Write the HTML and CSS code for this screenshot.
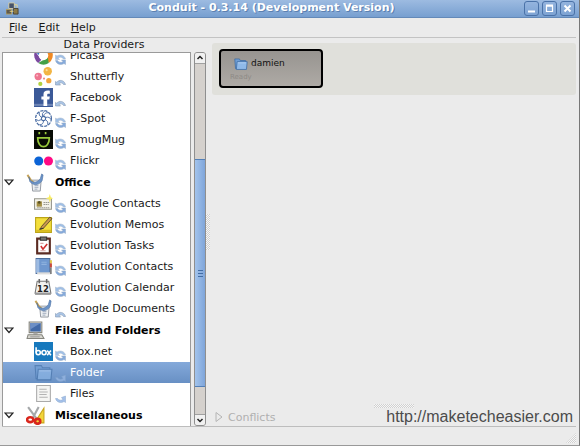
FILE: index.html
```
<!DOCTYPE html>
<html lang="en">

<head>
    <meta charset="UTF-8">
    <meta name="viewport" content="width=device-width, initial-scale=1.0">
    <title>Conduit - 0.3.14 (Development Version)</title>
    <link rel="stylesheet" href="styles.css">
</head>

<body>
    <!-- shared icons -->
    <svg class="sprites" width="0" height="0" aria-hidden="true">
        <symbol id="sync" viewBox="0 0 11 11">
            <path d="M.5 1v4.500h4L3 4c2-1.500 4-1 5.500 1h2C9.500 1 5 0 2 2z" fill="#9fbfe6" stroke="#a9b9cc" stroke-width=".5" />
            <path d="M10.500 10.500V6h-4L8 7.500C6 9 4 8.500 2.500 6.500h-2C1.500 10.500 6 11.500 9 9.500z" fill="#86abdc" stroke="#93a9c6" stroke-width=".5" />
        </symbol>
        <symbol id="sync-up" viewBox="0 0 11 11">
            <path d="M.5 10V6.500l1.200.7C4 4.500 9 4.500 10.500 9.500H8.500C7.500 7.500 5.500 7.500 4 8.500L5.500 10z" fill="#a9c4e6" stroke="#8398b4" stroke-width=".6" />
        </symbol>
        <symbol id="sync-down" viewBox="0 0 11 11">
            <path d="M10.500 4v6.500L9 9.500C6 11.500 1.500 10.500.5 6.500h2C4 8.500 6 8.500 8 7.500L6.500 5.500z" fill="#a3c0ea" stroke="#8ba6ca" stroke-width=".5" />
        </symbol>
        <symbol id="folder" viewBox="0 0 18 18">
            <path d="M1 2.500h6l1 2h7V15H2z" fill="#6f9ed4" stroke="#3e6ca3" />
            <path d="M4 6h13l-1 10H3z" fill="#8fb9e8" stroke="#3e6ca3" />
            <path d="M5 7.500h10.500" stroke="#b9d5f5" />
        </symbol>
        <symbol id="office" viewBox="0 0 20 20">
            <path d="M6 7.500l10 0-1 11.500H7z" fill="#eef0f2" stroke="#9298a0" />
            <path d="M1.500 2l4 6 3 2.500" fill="none" stroke="#c9a456" stroke-width="2" />
            <path d="M3 4c1 6 8 8 12 2l1.500-5 1.500 1-1 6c-4 6-10 5-13 1z" fill="#6b93c8" stroke="#456c9f" stroke-width=".6" />
            <path d="M9 13h4M9 15h4M9 17h3" stroke="#9aa8ba" />
        </symbol>
        <symbol id="expander" viewBox="0 0 10 7">
            <path d="M1 1h8L5 5.500z" fill="#fff" stroke="#222" stroke-width="1.200" />
        </symbol>
    </svg>

    <header class="titlebar">
        <svg class="app-icon" viewBox="0 0 14 14">
            <path d="M3 1h6v6H3z" fill="#46536a" stroke="#d5cfae" />
            <path d="M0 8h6v5H0z" fill="#5e5a4e" stroke="#b7a368" />
            <path d="M8 7h5v6H8z" fill="#8c7a47" stroke="#4a4437" />
            <path d="M9 3h3v3M4 10h4" stroke="#e8d88a" fill="none" />
        </svg>
        <h1>Conduit - 0.3.14 (Development Version)</h1>
        <div class="window-buttons">
            <button aria-label="Minimize"><svg viewBox="0 0 13 13"><path d="M3 9.500h7" stroke="#fff" stroke-width="2" /></svg></button>
            <button aria-label="Maximize"><svg viewBox="0 0 13 13"><path d="M3.500 4h6v5.500h-6z" fill="none" stroke="#fff" stroke-width="1.200" /><path d="M3 3.500h7" stroke="#fff" stroke-width="2" /></svg></button>
            <button aria-label="Close"><svg viewBox="0 0 13 13"><path d="M3.500 3.500l6 6M9.500 3.500l-6 6" stroke="#fff" stroke-width="2" /></svg></button>
        </div>
    </header>

    <nav class="menubar">
        <button><u>F</u>ile</button>
        <button><u>E</u>dit</button>
        <button><u>H</u>elp</button>
    </nav>

    <main class="panes">
        <section class="providers">
            <h2>Data Providers</h2>
            <div class="tree-box">
                <ul class="tree">
                    <li><button class="row">
                        <svg class="icon" viewBox="0 0 18 18"><path d="M9 0a9 9 0 0 1 8 5H8z" fill="#e8453c" /><path d="M17 5a9 9 0 0 1-3 11L10 7z" fill="#f08a24" /><path d="M14 16a9 9 0 0 1-10 0l9-5z" fill="#43a047" /><path d="M4 16A9 9 0 0 1 1 5l6 8z" fill="#7b4aa0" /><path d="M1 5a9 9 0 0 1 8-5L5 9z" fill="#3d7cc9" /><circle cx="9" cy="9" r="4.500" fill="#fff" /></svg>
                        <svg class="sync"><use href="#sync" /></svg>Picasa</button></li>
                    <li><button class="row">
                        <svg class="icon" viewBox="0 0 18 18"><circle cx="13" cy="4" r="4" fill="#f2b544" /><circle cx="4" cy="9" r="3.500" fill="#ee7590" /><circle cx="14" cy="13" r="2.500" fill="#f3a53b" /><circle cx="6" cy="16" r="2" fill="#b3d240" /><circle cx="9.500" cy="11" r="1" fill="#e88" /><circle cx="3" cy="8" r="1" fill="#f8bcc8" /><circle cx="12" cy="3" r="1" fill="#fade9b" /></svg>
                        <svg class="sync"><use href="#sync-up" /></svg>Shutterfly</button></li>
                    <li><button class="row">
                        <svg class="icon" viewBox="0 0 18 18"><path d="M0 0h18v18H0z" fill="#3b5998" /><path d="M0 15h18v2H0z" fill="#6d84b4" /><path d="M9 17v-6H7V8h2V6c0-3 2-4 6-3.500v3c-2-.3-2.500 0-2.500 1V8H15l-.5 3h-2v6z" fill="#fff" /></svg>
                        <svg class="sync"><use href="#sync-up" /></svg>Facebook</button></li>
                    <li><button class="row">
                        <svg class="icon" viewBox="0 0 18 18"><g fill="none" stroke="#4d6fa5"><circle cx="9" cy="9" r="7.500" stroke-dasharray="3 1" stroke-width="1.200" /><circle cx="9" cy="9" r="2" /><path d="M9 7q1-4 5-3.500M11 8q4-1 5 2M11 10q3 2 2 5M9 11q0 4-4 4M7 10q-3 2-5 0M7 8q-3-2-2-5M8 7q-1-3 2-5" stroke-width=".9" /></g></svg>
                        <svg class="sync"><use href="#sync" /></svg>F-Spot</button></li>
                    <li><button class="row">
                        <svg class="icon" viewBox="0 0 18 18"><path d="M0 0h18v18H0z" fill="#080b05" /><path d="M3.500 7.500h11c0 11-11 11-11 0z" fill="none" stroke="#9acb3c" stroke-width="1.600" /><path d="M5 2v2M11 2v2" stroke="#9acb3c" stroke-width="1.600" /></svg>
                        <svg class="sync"><use href="#sync" /></svg>SmugMug</button></li>
                    <li><button class="row">
                        <svg class="icon" viewBox="0 0 18 18"><circle cx="4.500" cy="9.500" r="4.300" fill="#0b63d6" /><circle cx="13.700" cy="9.500" r="4.300" fill="#ff0a84" /></svg>
                        <svg class="sync"><use href="#sync" /></svg>Flickr</button></li>

                    <li><button class="row group" aria-expanded="true">
                        <svg class="arrow"><use href="#expander" /></svg>
                        <svg class="icon"><use href="#office" /></svg>Office</button></li>
                    <li><button class="row">
                        <svg class="icon" viewBox="0 0 18 18"><path d="M.5 4.500h16v10H.5z" fill="#f4f3ea" stroke="#96968c" /><path d="M2.500 7h5v5h-5z" fill="#a38e42" /><circle cx="5" cy="8" r="1.300" fill="#5c5224" /><path d="M9 8h6M9 10h5M3 13h12" stroke="#9a9a92" stroke-dasharray="1.500 .5" /><path d="M15 0l1 3 2 1-2 1-1 3-1-3-3-1 3-1z" fill="#f8ec62" /></svg>
                        <svg class="sync"><use href="#sync" /></svg>Google Contacts</button></li>
                    <li><button class="row">
                        <svg class="icon" viewBox="0 0 18 18"><path d="M1.500 2.500h15v14h-15z" fill="#f4df3c" stroke="#bba418" /><path d="M2 14h14v2H2z" fill="#d7bb21" /><path d="M7 11l8-9 2 1.500-8 9-3 1z" fill="#c99850" stroke="#59482a" stroke-width=".8" /><path d="M5 13.500l4-1" stroke="#333" /></svg>
                        <svg class="sync"><use href="#sync" /></svg>Evolution Memos</button></li>
                    <li><button class="row">
                        <svg class="icon" viewBox="0 0 18 18"><path d="M3 2.500h12v14H3z" fill="#fff" stroke="#5b2b22" stroke-width="2" /><path d="M6 1h6v3H6z" fill="#777" stroke="#333" /><path d="M6.500 9.500l2 3 4-5" fill="none" stroke="#cf2f2f" stroke-width="1.500" /><path d="M6 7h3M6 14h5" stroke="#d9a4a4" /></svg>
                        <svg class="sync"><use href="#sync" /></svg>Evolution Tasks</button></li>
                    <li><button class="row">
                        <svg class="icon" viewBox="0 0 18 18"><path d="M2 1.500h13v14H2z" fill="#6f98cf" stroke="#4b6d9d" /><path d="M2 2h3v13H2z" fill="#9dbbe2" /><path d="M3 15.500h13" stroke="#ddd" stroke-width="2" /><path d="M16 3v3" stroke="#e2c94c" stroke-width="2" /><path d="M16 6v4" stroke="#c94a3d" stroke-width="2" /><path d="M16 10v6" stroke="#777" stroke-width="1.500" /><path d="M7 5h5M7 7h5" stroke="#8fb2de" /></svg>
                        <svg class="sync"><use href="#sync" /></svg>Evolution Contacts</button></li>
                    <li><button class="row">
                        <svg class="icon" viewBox="0 0 18 18"><path d="M3 3h11l2 11.500H1z" fill="#f2f2f0" stroke="#777" /><path d="M1 14h15v2H1z" fill="#999" /><path d="M5 1v4M12 1v4" stroke="#666" stroke-width="1.500" /><text x="8.500" y="13" text-anchor="middle" class="day">12</text></svg>
                        <svg class="sync"><use href="#sync" /></svg>Evolution Calendar</button></li>
                    <li><button class="row">
                        <svg class="icon"><use href="#office" /></svg>
                        <svg class="sync"><use href="#sync-up" /></svg>Google Documents</button></li>

                    <li><button class="row group" aria-expanded="true">
                        <svg class="arrow"><use href="#expander" /></svg>
                        <svg class="icon" viewBox="0 0 18 18"><path d="M3 1h12v10H3z" fill="#e2e1db" stroke="#84847c" /><path d="M4 2h10v8H4z" fill="#4169a8" /><path d="M4 2h10L4 8z" fill="#6c8fc6" /><path d="M7 11h4v2H7z" fill="#aaa" /><path d="M2 13h13l2 3.500H1z" fill="#d6d5ce" stroke="#85857e" /><path d="M4 15h9" stroke="#999" /></svg>Files and Folders</button></li>
                    <li><button class="row">
                        <svg class="icon" viewBox="0 0 18 18"><path d="M0 0h18v18H0z" fill="#1779bd" /><g fill="none" stroke="#fff" stroke-width="1.500"><path d="M2 5v5" /><circle cx="4" cy="10" r="2" /><circle cx="9.500" cy="10" r="2" /><path d="M12.500 8l3.500 4.500M16 8l-3.500 4.500" /></g></svg>
                        <svg class="sync"><use href="#sync" /></svg>Box.net</button></li>
                    <li><button class="row selected">
                        <svg class="icon dim"><use href="#folder" /></svg>
                        <svg class="sync dim"><use href="#sync-down" /></svg>Folder</button></li>
                    <li><button class="row">
                        <svg class="icon" viewBox="0 0 18 18"><path d="M2.500 1.500h13v15h-13z" fill="#f5f5f3" stroke="#aaa" /><path d="M5 5h7M5 7.500h8M5 10h7M5 12.500h8" stroke="#b3b3b3" /></svg>
                        <svg class="sync"><use href="#sync-down" /></svg>Files</button></li>

                    <li><button class="row group" aria-expanded="true">
                        <svg class="arrow"><use href="#expander" /></svg>
                        <svg class="icon" viewBox="0 0 18 18"><path d="M17 2v14H8z" fill="#f3d43a" stroke="#c8a51d" /><path d="M2 1l8 11M12 1L6 12" stroke="#a5a8aa" stroke-width="2" /><g fill="none" stroke="#d9261c" stroke-width="2.500"><ellipse cx="4" cy="13" rx="3" ry="2.300" /><ellipse cx="11" cy="14.500" rx="2.500" ry="2.300" /></g></svg>Miscellaneous</button></li>
                </ul>
                <div class="scrollbar">
                    <button class="scroll-arrow" aria-label="Scroll up"><svg viewBox="0 0 10 10"><path d="M2.500 6L5 3.500 7.500 6" /></svg></button>
                    <div class="trough-above"></div>
                    <div class="thumb"></div>
                    <div class="trough-below"></div>
                    <button class="scroll-arrow" aria-label="Scroll down"><svg viewBox="0 0 10 10"><path d="M2.500 4L5 6.500 7.500 4" /></svg></button>
                </div>
            </div>
        </section>

        <div class="splitter"><span class="grip grip-tall"></span></div>

        <section class="workspace">
            <div class="canvas">
                <div class="conduit">
                    <div class="dataprovider">
                        <div class="name"><svg><use href="#folder" /></svg>damien</div>
                        <div class="status">Ready</div>
                    </div>
                </div>
            </div>
            <span class="grip grip-wide"></span>
            <div class="bottom-row">
                <button class="conflicts" disabled>
                    <svg viewBox="0 0 8 12"><path d="M1 1.500l6 4.500-6 4.500z" fill="none" stroke="#b4b4b4" /></svg>Conflicts
                </button>
                <a class="site" href="http://maketecheasier.com">http://maketecheasier.com</a>
            </div>
        </section>
    </main>

    <footer class="statusbar"><span class="grip resize"></span></footer>
</body>

</html>
```

FILE: styles.css
```
* {
    box-sizing: border-box;
}

body {
    margin: 0;
    height: 100vh;
    display: flex;
    flex-direction: column;
    background: #ebebeb;
    border-right: 1px solid #777;
    border-bottom: 1px solid #999;
    font-family: "DejaVu Sans", sans-serif;
    font-size: 11px;
    color: #1a1a1a;
    overflow: hidden;
}

button {
    margin: 0;
    padding: 0;
    border: none;
    background: none;
    font: inherit;
    color: inherit;
}

svg {
    display: block;
    flex: none;
}

.sprites {
    position: absolute;
}

.titlebar {
    flex: none;
    height: 18px;
    padding: 0 4px 1px 6px;
    display: flex;
    align-items: center;
    background: linear-gradient(#9dbbe1, #779fd0);
    border-bottom: 1px solid #6389b8;
}

.app-icon {
    width: 13px;
    height: 13px;
}

.titlebar h1 {
    flex: 1;
    margin: 0;
    text-align: center;
    font-size: 11px;
    line-height: 14px;
    color: #fff;
    text-shadow: 1px 1px 0 #5b80b0;
    white-space: nowrap;
}

.window-buttons {
    display: flex;
    gap: 3px;
}

.window-buttons button {
    width: 15px;
    height: 15px;
    border: 1px solid #4a72a8;
    border-radius: 3px;
    background: linear-gradient(#94b4de, #7da3d3);
}

.menubar {
    flex: none;
    height: 20px;
    margin: 0 3px 0 2px;
    padding-left: 7px;
    display: flex;
    align-items: center;
    gap: 11px;
    border-bottom: 1px solid #c3c3c3;
}

.panes {
    flex: 1;
    min-height: 0;
    display: flex;
    margin: 0 3px 0 2px;
}

.providers {
    width: 204px;
    display: flex;
    flex-direction: column;
}

.providers h2 {
    margin: 0;
    font-size: 11px;
    font-weight: normal;
    line-height: 14px;
    text-align: center;
}

.tree-box {
    flex: 1;
    min-height: 0;
    display: flex;
    gap: 3px;
}

/* scrolled to the end, so the rows hang from the bottom edge */
.tree {
    flex: 1;
    margin: 0;
    padding: 0;
    list-style: none;
    display: flex;
    flex-direction: column;
    justify-content: flex-end;
    overflow: hidden;
    background: #fff;
    border: 1px solid #9a9a9a;
    border-bottom: none;
}

.row {
    width: 100%;
    height: 21px;
    padding-left: 31px;
    display: flex;
    align-items: center;
    white-space: nowrap;
}

.row .icon {
    width: 19px;
    height: 19px;
}

.row .sync {
    width: 11px;
    height: 11px;
    margin: 7px 4px 0 2px;
}

.row .dim {
    opacity: 0.6;
}

.day {
    font-size: 8px;
    font-weight: bold;
    fill: #222;
}

.group {
    height: 22px;
    padding-left: 1px;
    font-weight: bold;
    color: #000;
}

.group .arrow {
    width: 10px;
    height: 7px;
    margin-right: 12px;
}

.group .icon {
    margin-right: 10px;
}

.selected {
    background: linear-gradient(#84a9da, #6890c4);
    color: #fff;
}

.scrollbar {
    width: 12px;
    display: flex;
    flex-direction: column;
    background: #d5d1cd;
    border: 1px solid #8f8f8f;
    border-radius: 3px;
    overflow: hidden;
}

.scroll-arrow {
    height: 11px;
    background: #f1f1f1;
    border-bottom: 1px solid #a0a0a0;
}

.scroll-arrow:last-child {
    border-top: 1px solid #a0a0a0;
    border-bottom: none;
}

.scroll-arrow path {
    fill: none;
    stroke: #222;
    stroke-width: 1.5;
}

.trough-above {
    flex: 96;
}

.trough-below {
    flex: 27;
}

.thumb {
    flex: 228;
    border: solid #527fb8;
    border-width: 1px 0;
    background:
        repeating-linear-gradient(#426da5 0 1px, transparent 1px 3px) center / 5px 7px no-repeat,
        linear-gradient(to right, #a3c4ec, #7fa5da);
}

.splitter {
    width: 6px;
    display: flex;
    align-items: center;
}

.grip {
    background: repeating-conic-gradient(#d0d0d0 0 25%, #f6f6f6 0 50%) 0 0 / 2px 2px;
}

.grip-tall {
    width: 4px;
    height: 36px;
}

.grip-wide {
    align-self: center;
    width: 40px;
    height: 4px;
}

.workspace {
    flex: 1;
    display: flex;
    flex-direction: column;
}

.canvas {
    flex: 1;
    padding-top: 5px;
}

.conduit {
    padding: 6px 7px 7px;
    background: #e0e0db;
    border-radius: 3px;
}

.dataprovider {
    width: 104px;
    height: 39px;
    padding: 5px 9px 0;
    border: 2px solid #000;
    border-radius: 4px;
    background: linear-gradient(#979490, #aeaaa5);
    font-size: 9px;
}

.dataprovider .name {
    display: flex;
    align-items: center;
    gap: 3px;
    padding-left: 4px;
    line-height: 15px;
    color: #111;
}

.dataprovider svg {
    width: 14px;
    height: 14px;
}

.dataprovider .status {
    font-size: 7px;
    line-height: 12px;
    color: #8e8a86;
}

.bottom-row {
    height: 18px;
    padding: 0 3px;
    display: flex;
    align-items: center;
    justify-content: space-between;
}

.conflicts {
    display: flex;
    align-items: center;
    gap: 5px;
    color: #b0b0b0;
}

.conflicts svg {
    width: 8px;
    height: 12px;
}

.site {
    font-family: "Liberation Sans", sans-serif;
    font-size: 16px;
    line-height: 18px;
    color: #4c4c4c;
    text-decoration: none;
}

.statusbar {
    flex: none;
    height: 19px;
    margin: 0 3px 0 2px;
    display: flex;
    align-items: flex-end;
    justify-content: flex-end;
    border-top: 1px solid #bdbdbd;
}

.resize {
    width: 10px;
    height: 10px;
    margin-bottom: 2px;
    clip-path: polygon(100% 0, 100% 100%, 0 100%);
}
```
